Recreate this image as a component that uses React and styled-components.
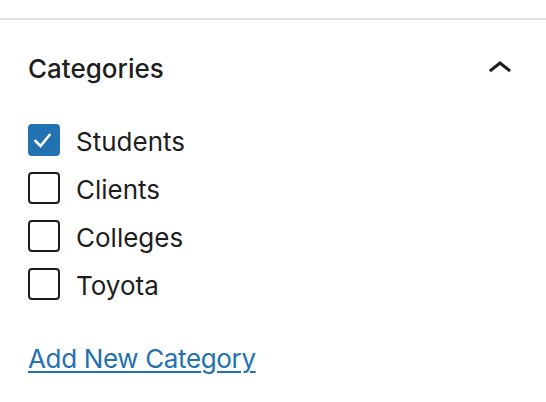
import React from "react";
import styled, { createGlobalStyle } from "styled-components";

const GlobalStyle = createGlobalStyle`
  body {
    margin: 0;
    background: #fff;
    font-family: Inter, "Noto Sans", sans-serif;
    color: #1e1e1e;
  }
`;

const Page = styled.div`
  padding-top: 18px;
  width: 546px;
  height: 402px;
  box-sizing: border-box;
  background: #fff;
`;

const Panel = styled.section`
  border-top: 2px solid #e0e0e0;
`;

const Header = styled.div`
  height: 96px;
  padding: 1px 22px 0 28px;
  box-sizing: border-box;
  display: flex;
  align-items: center;
  justify-content: space-between;
`;

const Title = styled.h2`
  margin: 0;
  font-size: 26px;
  line-height: 32px;
  font-weight: 500;
  color: #1e1e1e;
`;

const Toggle = styled.button`
  width: 48px;
  height: 48px;
  padding: 0;
  border: none;
  background: none;
  display: flex;
  align-items: center;
  justify-content: center;
  cursor: pointer;

  svg {
    display: block;
  }
`;

const Body = styled.div`
  padding: 8px 28px 0;
`;

const List = styled.ul`
  list-style: none;
  margin: 0;
  padding: 0;
  display: flex;
  flex-direction: column;
  gap: 16px;
`;

const Row = styled.li`
  display: flex;
  align-items: center;
  height: 32px;
`;

const Box = styled.span`
  width: 32px;
  height: 32px;
  box-sizing: border-box;
  border-radius: 4px;
  border: 2px solid ${p => (p.checked ? "#2271b1" : "#1e1e1e")};
  background: ${p => (p.checked ? "#2271b1" : "#fff")};
  display: flex;
  align-items: center;
  justify-content: center;
  flex-shrink: 0;
`;

const Label = styled.span`
  margin-left: 16px;
  padding-top: 3px;
  font-size: 26px;
  line-height: 32px;
  color: #1e1e1e;
`;

const AddLink = styled.a`
  display: inline-block;
  margin-top: 43px;
  font-size: 26px;
  line-height: 32px;
  letter-spacing: -0.35px;
  color: #2271b1;
  text-decoration: underline;
  text-decoration-thickness: 2px;
  text-underline-offset: 3px;
`;

const categories = [
  { name: "Students", checked: true },
  { name: "Clients", checked: false },
  { name: "Colleges", checked: false },
  { name: "Toyota", checked: false },
];

const Check = () => (
  <svg width="28" height="28" viewBox="0 0 28 28">
    <polyline
      points="5.5,15 10.5,20 19.5,9"
      fill="none"
      stroke="#fff"
      strokeWidth="2.6"
      strokeLinecap="square"
    />
  </svg>
);

export default function App() {
  return (
    <>
      <GlobalStyle />
      <Page>
        <Panel>
          <Header>
            <Title>Categories</Title>
            <Toggle aria-label="Collapse">
              <svg width="48" height="48" viewBox="0 0 24 24">
                <path
                  d="M6.5 12.4L12 8l5.5 4.4-.9 1.2L12 10l-4.6 3.6-1-1.2z"
                  fill="#1e1e1e"
                />
              </svg>
            </Toggle>
          </Header>
          <Body>
            <List>
              {categories.map(c => (
                <Row key={c.name}>
                  <Box checked={c.checked}>{c.checked && <Check />}</Box>
                  <Label>{c.name}</Label>
                </Row>
              ))}
            </List>
            <AddLink href="#">Add New Category</AddLink>
          </Body>
        </Panel>
      </Page>
    </>
  );
}
